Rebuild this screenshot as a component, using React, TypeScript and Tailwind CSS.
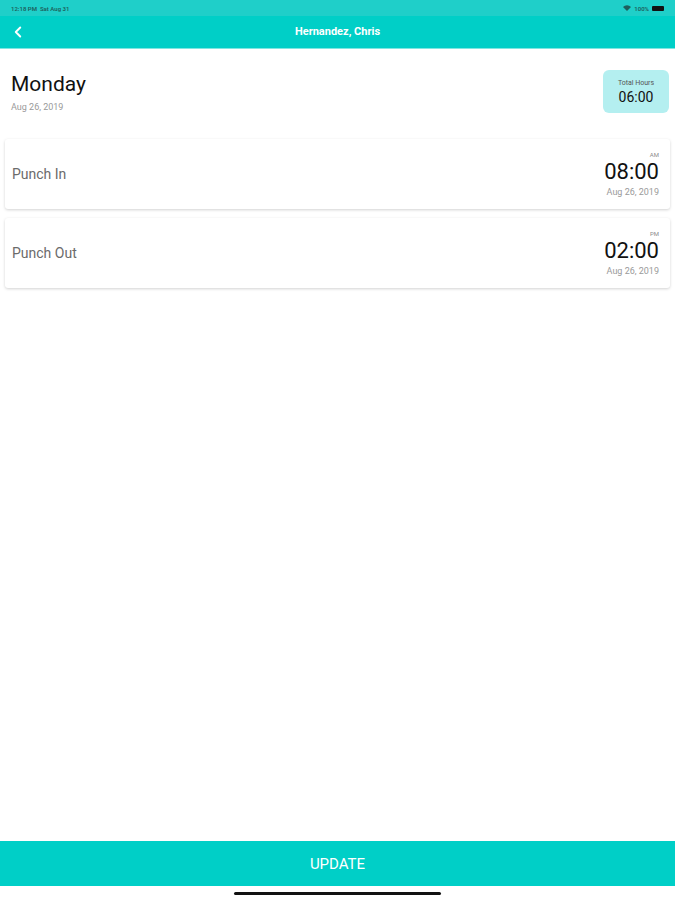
import { ChevronLeft } from "lucide-react";

const font = { fontFamily: "Roboto, 'Liberation Sans', sans-serif" };

function PunchCard({ label, period, time, date }: { label: string; period: string; time: string; date: string }) {
  return (
    <div className="mx-[5px] h-[70px] rounded-[3px] bg-white shadow-[0_1px_3px_rgba(0,0,0,0.18)] flex items-center justify-between pl-[7px] pr-[11px]">
      <span className="text-[14px] text-[#6b6b6b]">{label}</span>
      <div className="flex flex-col items-end pt-[2px]">
        <span className="text-[6px] leading-[8px] text-[#8a8a8a]">{period}</span>
        <span className="text-[22px] leading-[26px] text-[#111]">{time}</span>
        <span className="text-[9px] leading-[14px] text-[#9a9a9a]">{date}</span>
      </div>
    </div>
  );
}

export default function App() {
  return (
    <div className="w-[675px] h-[900px] bg-white flex flex-col" style={font}>
      <div className="h-[16px] bg-[#1fcfc9] flex items-center justify-between px-[11px] text-[6px] text-[#1d5f5c] font-semibold">
        <span>12:18 PM&nbsp;&nbsp;Sat Aug 31</span>
        <div className="flex items-center gap-[3px]">
          <svg width="8" height="6" viewBox="0 0 8 6">
            <path d="M0 2 A5.5 5.5 0 0 1 8 2 L4 6 Z" fill="#1d5f5c" />
          </svg>
          <span>100%</span>
          <div className="w-[12px] h-[5px] bg-[#111] rounded-[1px]" />
        </div>
      </div>
      <div className="h-[33px] bg-[#00cfc7] border-b border-[#7fe6e1] flex items-center relative">
        <ChevronLeft className="absolute left-[9px] w-[18px] h-[18px] text-white" strokeWidth={2.5} />
        <span className="flex-1 text-center text-white text-[11px] font-bold">Hernandez, Chris</span>
      </div>
      <div className="flex items-start justify-between pl-[11px] pr-[6px] pt-[22px]">
        <div className="flex flex-col">
          <span className="text-[21px] leading-[26px] text-[#111]">Monday</span>
          <span className="text-[9px] leading-[12px] text-[#9a9a9a] mt-[4px]">Aug 26, 2019</span>
        </div>
        <div className="w-[66px] h-[43px] mt-[-1px] rounded-[6px] bg-[#b4eff0] flex flex-col items-center justify-center">
          <span className="text-[7px] leading-[10px] text-[#555]">Total Hours</span>
          <span className="text-[14px] leading-[18px] text-[#111]">06:00</span>
        </div>
      </div>
      <div className="flex flex-col gap-[9px] mt-[26px]">
        <PunchCard label="Punch In" period="AM" time="08:00" date="Aug 26, 2019" />
        <PunchCard label="Punch Out" period="PM" time="02:00" date="Aug 26, 2019" />
      </div>
      <div className="flex-1" />
      <div className="h-[45px] bg-[#00cfc7] flex items-center justify-center text-white text-[15px] pt-[2px]">UPDATE</div>
      <div className="h-[14px] flex items-center justify-center">
        <div className="w-[207px] h-[3px] rounded-full bg-[#111]" />
      </div>
    </div>
  );
}
